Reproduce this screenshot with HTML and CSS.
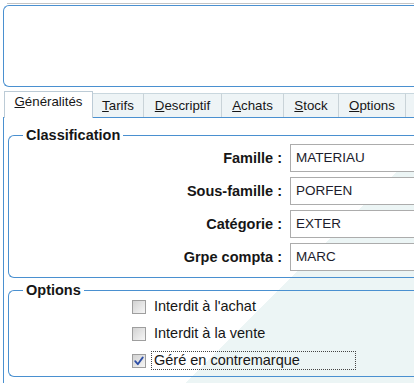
FILE: index.html
```html
<!DOCTYPE html>
<html lang="fr">
<head>
<meta charset="utf-8">
<title>Article</title>
<link rel="stylesheet" href="styles.css">
</head>
<body>
<div class="frame">
  <div class="topline"></div>
  <div class="memo"></div>
  <div class="tabs">
    <div class="tab active"><u>G</u>énéralités</div>
    <div class="tab t-tarifs"><u>T</u>arifs</div>
    <div class="tab t-desc"><u>D</u>escriptif</div>
    <div class="tab t-achats"><u>A</u>chats</div>
    <div class="tab t-stock"><u>S</u>tock</div>
    <div class="tab t-options"><u>O</u>ptions</div>
    <div class="tab more">&nbsp;</div>
  </div>
  <div class="panel">
    <fieldset class="group">
      <legend>Classification</legend>
      <div class="form">
        <label class="lab">Famille :</label><div class="field">MATERIAU</div>
        <label class="lab">Sous-famille :</label><div class="field">PORFEN</div>
        <label class="lab">Catégorie :</label><div class="field">EXTER</div>
        <label class="lab">Grpe compta :</label><div class="field">MARC</div>
      </div>
    </fieldset>
    <fieldset class="group options">
      <legend>Options</legend>
      <div class="checks">
        <div class="check"><span class="box"></span><span class="lbl">Interdit à l'achat</span></div>
        <div class="check"><span class="box"></span><span class="lbl">Interdit à la vente</span></div>
        <div class="check focus"><span class="box"><svg width="12" height="12" viewBox="0 0 12 12"><path d="M2.2 6.2 L4.8 9.2 L9.8 2.4" fill="none" stroke="#2d4ea6" stroke-width="1.8" stroke-linecap="round" stroke-linejoin="round"/></svg></span><span class="lbl">Géré en contremarque</span></div>
      </div>
    </fieldset>
  </div>
</div>
</body>
</html>
```
FILE: styles.css
```css
html, body {
  margin: 0;
  overflow: hidden;
}
body {
  background: #fff;
  font-family: "Liberation Sans", Arial, sans-serif;
  color: #161616;
}
.frame {
  box-sizing: border-box;
  width: 414px;
  height: 383px;
  overflow: hidden;
  padding-top: 3px;
  background: linear-gradient(135deg, #ffffff 402px, #ecf5f5 402px);
}
.topline {
  height: 1px;
  margin-left: 7px;
  margin-bottom: 1px;
  background: #c4c4c4;
}
.memo {
  margin-left: 3px;
  width: 440px;
  height: 80px;
  border: 1px solid #4a90d0;
  border-right: none;
  border-radius: 6px 0 0 6px;
  background: #fff;
}
.tabs {
  display: flex;
  align-items: flex-end;
  width: 440px;
  height: 26px;
  margin-top: 4px;
  margin-left: 4px;
  font-size: 13.3px;
  line-height: 16px;
}
.tab {
  box-sizing: border-box;
  flex: none;
  height: 24px;
  padding-top: 4px;
  text-align: center;
  background: #eef4f6;
  border-top: 1px solid #c9d7de;
  border-right: 1px solid #c9d3d8;
  white-space: nowrap;
}
.t-tarifs { width: 51px; }
.t-desc { width: 78px; }
.t-achats { width: 62px; }
.t-stock { width: 55px; }
.t-options { width: 67px; }
.tab.active {
  position: relative;
  z-index: 1;
  width: 89px;
  height: 27px;
  margin-bottom: -1px;
  padding-top: 2px;
  background: #fff;
  border: 1px solid #bccbd6;
  border-bottom: none;
}
.tab.more {
  flex: 1;
  border-right: none;
}
.panel {
  margin-left: 3px;
  width: 480px;
  height: 300px;
  padding: 9px 0 0 4px;
  border-top: 1px solid #4a90d0;
  border-left: 1px solid #4a90d0;
}
.group {
  width: 480px;
  min-width: 0;
  margin: 0;
  padding: 1px 0 6px 0;
  border: 1px solid #4a90d0;
  border-right: none;
  border-radius: 6px 0 0 6px;
}
.group legend {
  margin-left: 14px;
  padding: 0 3px;
  font-weight: bold;
  font-size: 14.5px;
  line-height: 16px;
}
.form {
  display: grid;
  grid-template-columns: 273px 1fr;
  column-gap: 8px;
  row-gap: 5px;
}
.lab {
  align-self: center;
  text-align: right;
  font-weight: bold;
  font-size: 14.5px;
  white-space: nowrap;
}
.field {
  box-sizing: border-box;
  height: 28px;
  padding-left: 5px;
  border: 1px solid #acacac;
  background: #fff;
  font-size: 13.5px;
  line-height: 26px;
  color: #1c1c2c;
}
.options {
  margin-top: 4px;
}
.checks {
  display: flex;
  flex-direction: column;
  gap: 8px;
  margin-top: -2px;
  padding-left: 123px;
}
.check {
  display: flex;
  align-items: center;
  height: 19px;
}
.box {
  box-sizing: border-box;
  display: flex;
  align-items: center;
  justify-content: center;
  width: 14px;
  height: 14px;
  border: 1px solid #9e9e9e;
  background: linear-gradient(135deg, #d2d2d2, #f6f6f6);
}
.lbl {
  margin-left: 5px;
  padding: 0 2px;
  border: 1px dotted transparent;
  font-size: 14.5px;
  line-height: 17px;
  white-space: nowrap;
}
.focus .lbl {
  border-color: #444;
  padding-right: 55px;
}
```
